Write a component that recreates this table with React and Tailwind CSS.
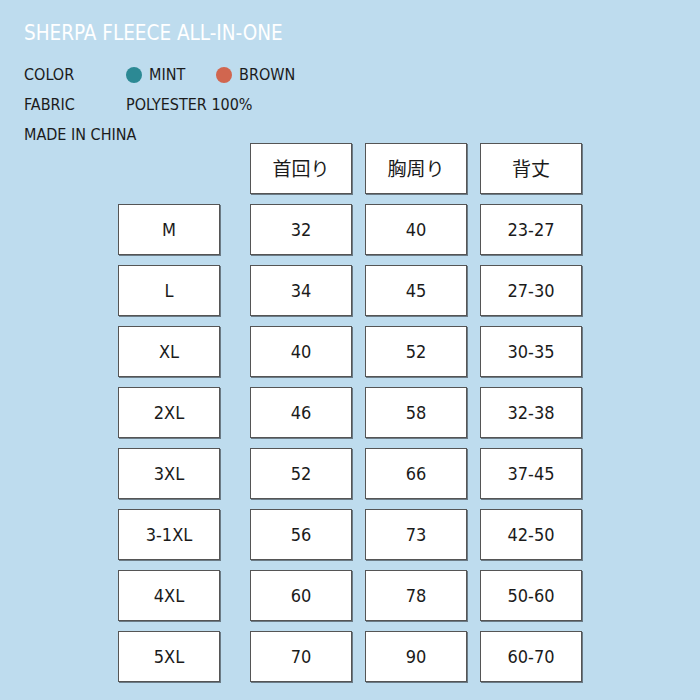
const rows = [
    ['M', '32', '40', '23-27'],
    ['L', '34', '45', '27-30'],
    ['XL', '40', '52', '30-35'],
    ['2XL', '46', '58', '32-38'],
    ['3XL', '52', '66', '37-45'],
    ['3-1XL', '56', '73', '42-50'],
    ['4XL', '60', '78', '50-60'],
    ['5XL', '70', '90', '60-70'],
];

const font = { fontFamily: '"Liberation Sans Narrow", "DejaVu Sans Condensed", Roboto, "Noto Sans CJK JP", sans-serif' };

function Cell({ children, className = '' }) {
    return (
        <div className={`w-[102px] h-[51px] bg-white border border-[#555] shadow-[1px_1px_0_#6b7b86] flex items-center justify-center text-[18px] text-[#1b1b1b] ${className}`}>
            {children}
        </div>
    );
}

export default function App() {
    return (
        <div className="w-[700px] h-[700px] bg-[#bedcee] pl-6 pt-[19px] text-[#1b1b1b]" style={font}>
            {/* Title */}
            <h1 className="text-[20.5px] leading-[28px] text-white">SHERPA FLEECE ALL-IN-ONE</h1>

            {/* Specs */}
            <div className="mt-[13px] text-[16px] leading-[30px]">
                <div className="flex items-center">
                    <span className="w-[102px]">COLOR</span>
                    <span className="w-4 h-4 rounded-full bg-[#2c8994]" />
                    <span className="ml-[7px] w-[67px]">MINT</span>
                    <span className="w-4 h-4 rounded-full bg-[#d1664f]" />
                    <span className="ml-[7px]">BROWN</span>
                </div>
                <div className="flex items-center">
                    <span className="w-[102px]">FABRIC</span>
                    <span>POLYESTER 100%</span>
                </div>
                <div>MADE IN CHINA</div>
            </div>

            {/* Size table */}
            <div className="ml-[94px] mt-[-7px] flex flex-col gap-[10px]">
                <div className="flex">
                    <div className="w-[102px] mr-[30px]" />
                    <div className="flex gap-[13px]" style={{ fontFamily: '"Noto Sans CJK JP", sans-serif' }}>
                        <Cell className="text-[19px]">首回り</Cell>
                        <Cell className="text-[19px]">胸周り</Cell>
                        <Cell className="text-[19px]">背丈</Cell>
                    </div>
                </div>
                {rows.map((r) => (
                    <div key={r[0]} className="flex">
                        <Cell className="mr-[30px]">{r[0]}</Cell>
                        <div className="flex gap-[13px]">
                            <Cell>{r[1]}</Cell>
                            <Cell>{r[2]}</Cell>
                            <Cell>{r[3]}</Cell>
                        </div>
                    </div>
                ))}
            </div>
        </div>
    );
}
